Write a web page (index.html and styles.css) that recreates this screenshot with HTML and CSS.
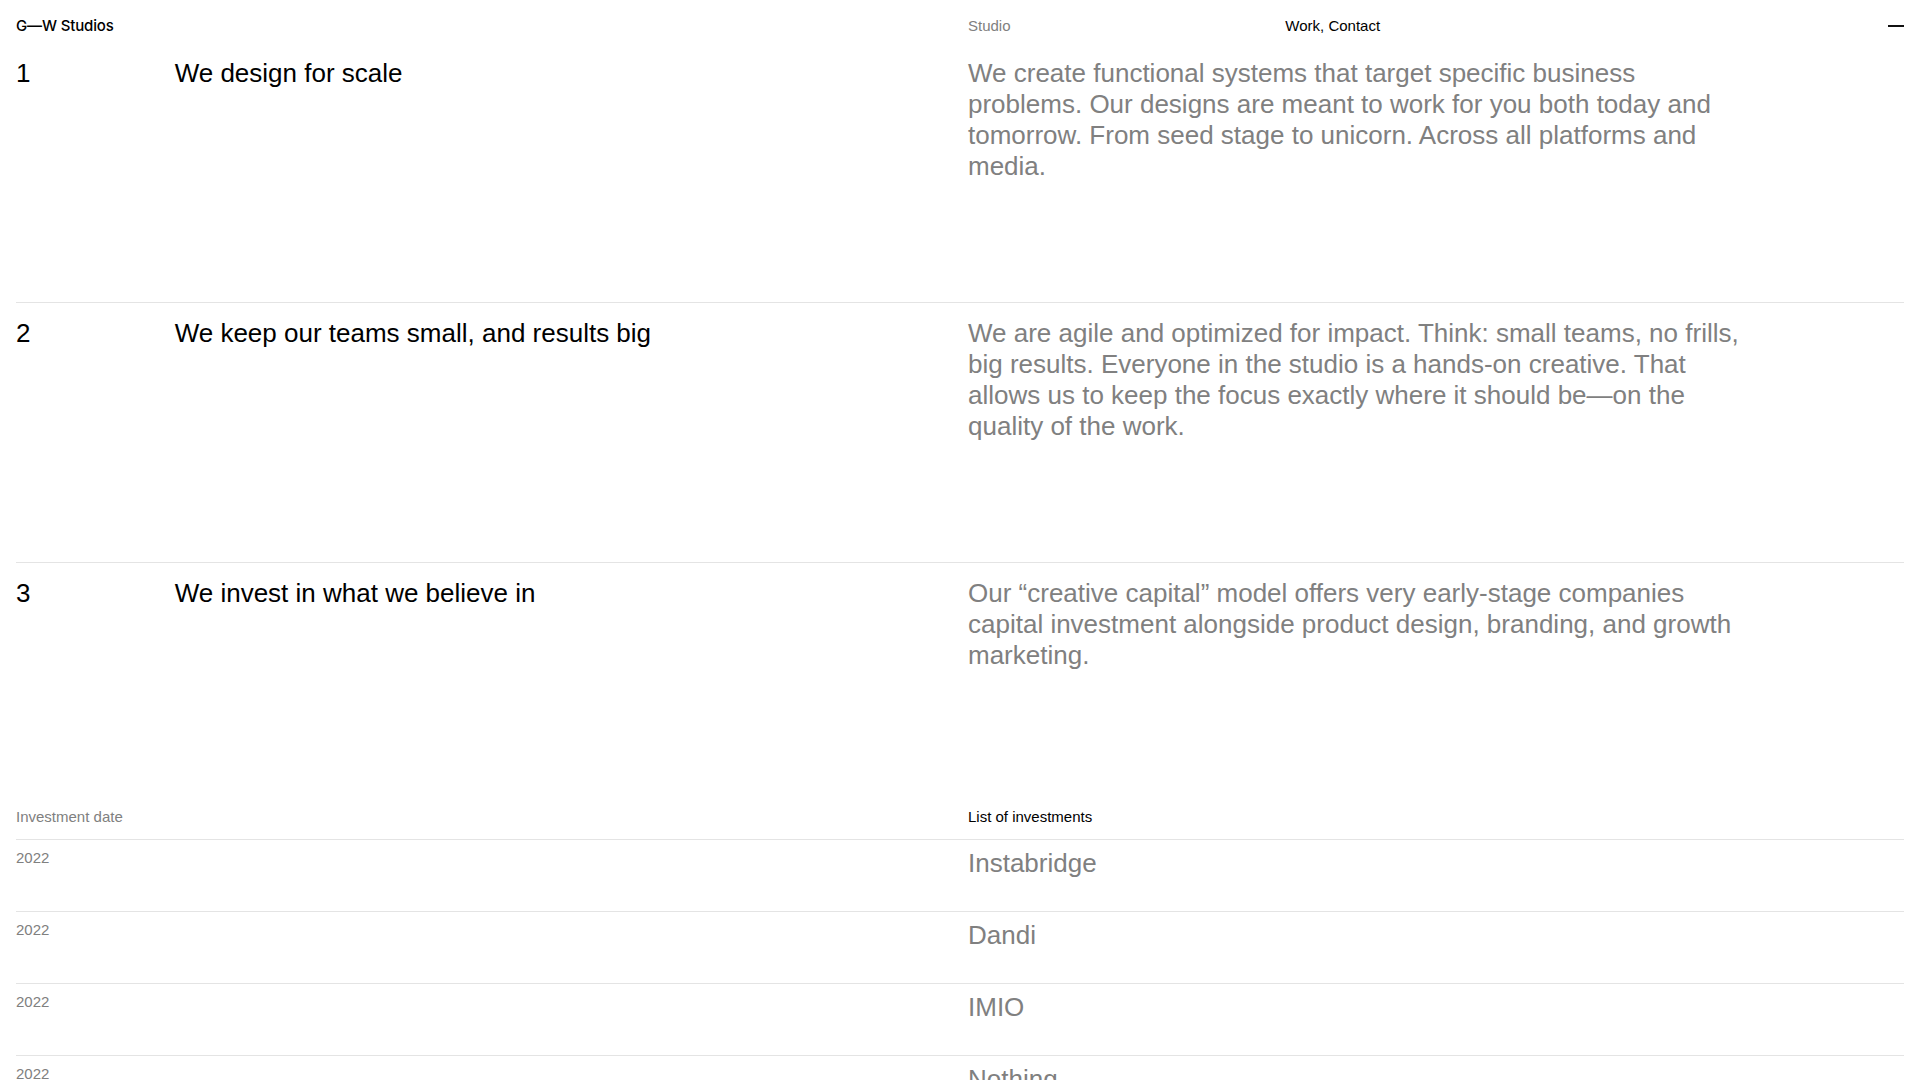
FILE: index.html
```html
<!DOCTYPE html>
<html lang="en">
<head>
<meta charset="utf-8">
<title>G—W Studios</title>
<link rel="stylesheet" href="styles.css">
</head>
<body>
<div class="page">
  <header class="topbar grid">
    <a class="logo" href="#">G—W Studios</a>
    <span class="nav-current">Studio</span>
    <nav class="nav-links"><a href="#">Work</a>, <a href="#">Contact</a></nav>
    <button class="menu-toggle" aria-label="Menu"><span class="menu-line"></span></button>
  </header>

  <section class="principle grid first">
    <div class="num">1</div>
    <h2 class="title">We design for scale</h2>
    <p class="desc">We create functional systems that target specific business problems. Our designs are meant to work for you both today and tomorrow. From seed stage to unicorn. Across all platforms and media.</p>
  </section>

  <section class="principle grid">
    <div class="num">2</div>
    <h2 class="title">We keep our teams small, and results big</h2>
    <p class="desc">We are agile and optimized for impact. Think: small teams, no frills, big results. Everyone in the studio is a hands-on creative. That allows us to keep the focus exactly where it should be—on the quality of the work.</p>
  </section>

  <section class="principle grid">
    <div class="num">3</div>
    <h2 class="title">We invest in what we believe in</h2>
    <p class="desc">Our “creative capital” model offers very early-stage companies capital investment alongside product design, branding, and growth marketing.</p>
  </section>

  <section class="investments">
    <div class="inv-head grid">
      <span class="inv-date-label">Investment date</span>
      <span class="inv-list-label">List of investments</span>
    </div>
    <div class="inv-row grid">
      <span class="inv-date">2022</span>
      <span class="inv-name">Instabridge</span>
    </div>
    <div class="inv-row grid">
      <span class="inv-date">2022</span>
      <span class="inv-name">Dandi</span>
    </div>
    <div class="inv-row grid">
      <span class="inv-date">2022</span>
      <span class="inv-name">IMIO</span>
    </div>
    <div class="inv-row grid">
      <span class="inv-date">2022</span>
      <span class="inv-name">Nothing</span>
    </div>
  </section>
</div>
</body>
</html>
```

FILE: styles.css
```css
* { box-sizing: border-box; }

html, body {
  margin: 0;
  padding: 0;
  background: #ffffff;
}

body {
  font-family: "Liberation Sans", Arial, sans-serif;
  color: #000000;
  -webkit-font-smoothing: antialiased;
}

a { color: inherit; text-decoration: none; }

.page {
  padding: 0 16px;
}

.grid {
  display: grid;
  grid-template-columns: repeat(12, minmax(0, 1fr));
  column-gap: 16px;
}

/* Top bar */
.topbar {
  height: 42px;
  padding-top: 16px;
  font-size: 15px;
  line-height: 20px;
  align-items: start;
}

.logo {
  grid-column: 1 / span 6;
  font-family: "Inter", "Liberation Sans", sans-serif;
  font-weight: 500;
  font-size: 15px;
  letter-spacing: -0.01em;
  line-height: 20px;
}

.nav-current {
  grid-column: 7 / span 2;
  color: #808080;
}

.nav-links {
  grid-column: 9 / span 3;
  color: #000;
}

.menu-toggle {
  grid-column: 12;
  justify-self: end;
  width: 16px;
  height: 20px;
  padding: 0;
  margin: 0;
  border: 0;
  background: none;
  display: flex;
  align-items: center;
  cursor: pointer;
}

.menu-line {
  display: block;
  width: 16px;
  height: 1.5px;
  background: #111;
  margin-top: 0;
}

/* Principles */
.principle {
  border-top: 1px solid #e4e4e4;
  padding: 15px 0 120px;
  font-size: 26px;
  line-height: 31px;
  letter-spacing: 0;
  align-items: start;
}

.principle.first {
  border-top-color: transparent;
}

.num {
  grid-column: 1;
}

.title {
  grid-column: 2 / span 5;
  margin: 0;
  font-size: inherit;
  font-weight: 400;
  line-height: inherit;
}

.desc {
  grid-column: 7 / span 5;
  margin: 0;
  color: #808080;
}

/* Investments */
.inv-head {
  padding: 16px 0 12px;
  font-size: 15px;
  line-height: 20px;
}

.inv-date-label {
  grid-column: 1 / span 6;
  color: #808080;
}

.inv-list-label {
  grid-column: 7 / span 6;
  color: #000;
}

.inv-row {
  border-top: 1px solid #e4e4e4;
  padding-top: 8px;
  height: 72px;
  align-items: start;
}

.inv-date {
  grid-column: 1 / span 6;
  font-size: 15px;
  line-height: 20px;
  color: #808080;
}

.inv-name {
  grid-column: 7 / span 6;
  font-size: 26px;
  line-height: 31px;
  color: #808080;
}
```
